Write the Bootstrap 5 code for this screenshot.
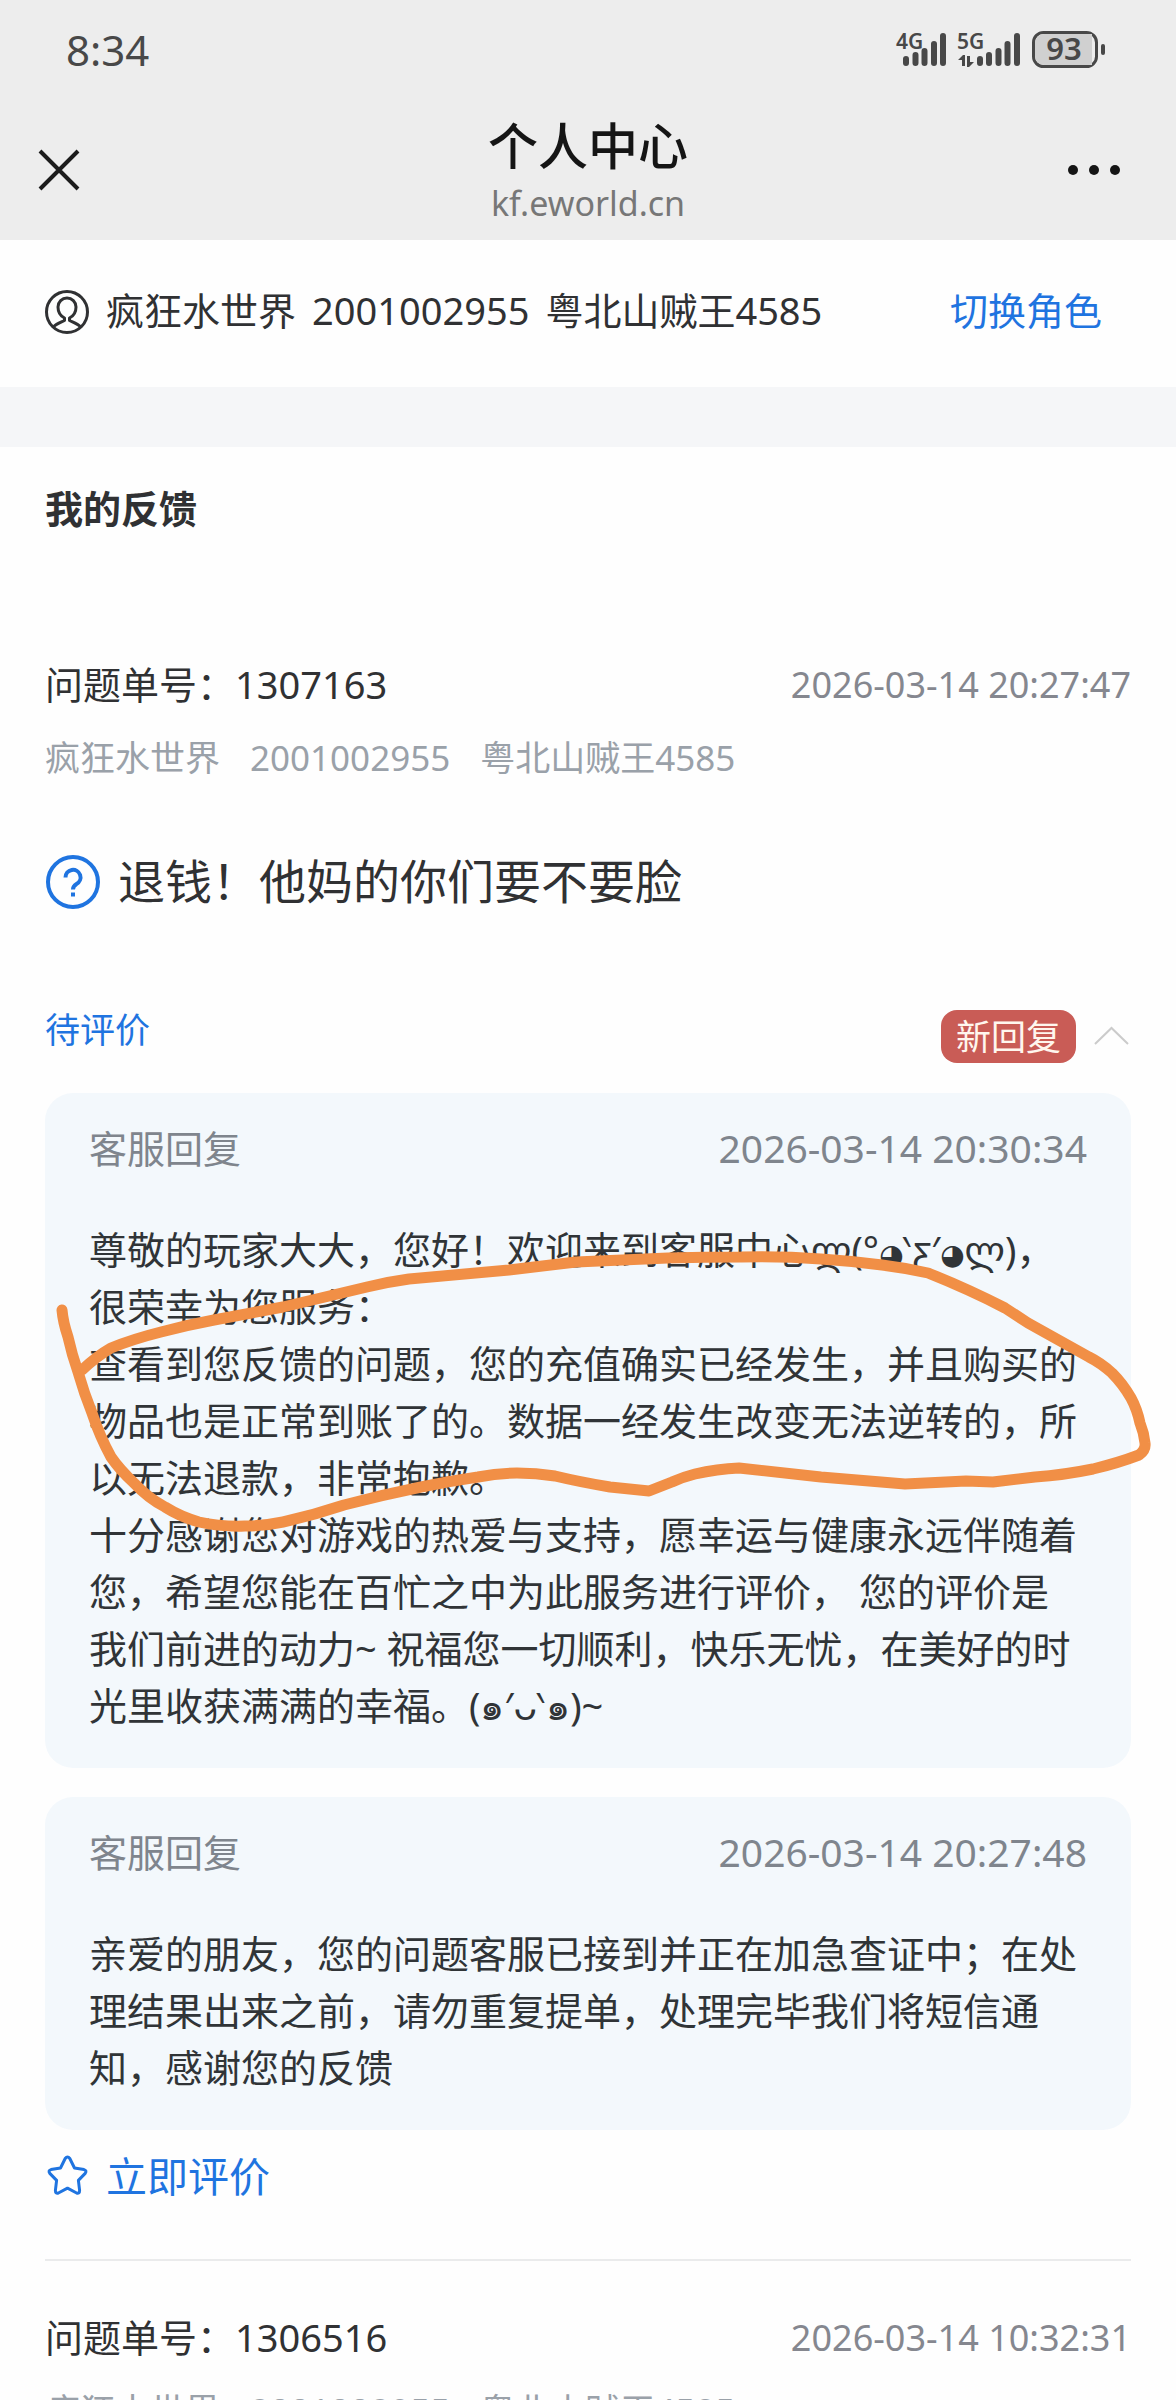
<!DOCTYPE html>
<html lang="zh-CN">
<head>
<meta charset="utf-8">
<meta name="viewport" content="width=device-width, initial-scale=1">
<title>个人中心</title>
<link href="https://cdn.jsdelivr.net/npm/bootstrap@5.3.0/dist/css/bootstrap.min.css" rel="stylesheet">
<style>
  body { font-family: "Noto Sans", "Noto Sans CJK SC", "DejaVu Sans", sans-serif; font-size: 38px; line-height: 58px; color: #303133; background: #fefefe; }
  a { color: #1f74e0; text-decoration: none; }
  svg { display: block; flex: none; }
  .screen { height: 100vh; overflow: hidden; }
  .app-head { background: #ededed; }
  .status-line { height: 100px; padding: 0 70px 0 66px; font-size: 42px; color: #484848; }
  .title-bar { height: 140px; padding: 0 36px; }
  .title-bar h1 { font-size: 50px; line-height: 56px; font-weight: 500; color: #151515; margin: 0 0 9px; }
  .title-bar .host { font-size: 34px; line-height: 40px; color: #777; }
  .title-side { width: 76px; }
  .icon-btn { background: none; border: 0; padding: 0; }
  .account { padding: 38px 74px 45px 45px; line-height: 64px; }
  .account-icon { margin-right: 17px; }
  .gap-name { column-gap: 16px; }
  .divider-band { height: 60px; background: #f5f6f8; }
  .feedback { padding: 32px 45px 0; }
  .feedback h2 { font-size: 38px; line-height: 58px; font-weight: 700; margin: 0 0 118px; }
  .stamp { font-size: 36px; line-height: 60px; color: #85878f; }
  .role-line { margin-top: 18px; font-size: 35px; line-height: 50px; column-gap: 30px; color: #9aa1a9; }
  .question { margin: 66px 0 97px; gap: 18px; }
  .question h3 { font-size: 47px; line-height: 64px; font-weight: 400; margin: 0; }
  .state { font-size: 35px; line-height: 40px; color: #1f74e0; }
  .new-tag { font-size: 35px; line-height: 53px; padding: 0 15px; border-radius: 16px; background: #c95c56; color: #fff6ee; font-weight: 400; }
  .replies { margin-top: 30px; gap: 29px; }
  .reply { background: #f3f8fc; border: 0; border-radius: 28px; padding: 25px 44px 34px 44px; color: #303437; }
  .reply-head { line-height: 60px; margin-bottom: 43px; color: #7f858d; }
  .reply-head time { font-size: 39px; }
  .reply p { margin: 0 4px 0 0; line-height: 57px; }
  .eye { font-size: 28px; line-height: 1; }
  .pen-mark { position: absolute; top: 0; left: 0; width: 100%; overflow: visible; pointer-events: none; }
  .rate { margin-top: 18px; font-size: 41px; line-height: 56px; gap: 18px; }
  .rule-line { height: 2px; background: #eaebec; margin: 55px 0 47px; }
</style>
<script src="https://cdn.jsdelivr.net/npm/bootstrap@5.3.0/dist/js/bootstrap.bundle.min.js"></script>
</head>
<body>
<div class="screen">
  <header class="app-head">
    <div class="status-line d-flex align-items-center justify-content-between">
      <span>8:34</span>
      <svg width="212" height="80" viewBox="894 10 212 80" fill="#484848" role="img" aria-label="4G 5G 93">
        <g font-family="Noto Sans, sans-serif" font-weight="600">
          <text x="896" y="49" font-size="21">4G</text>
          <text x="957" y="49" font-size="21">5G</text>
          <g stroke="#484848" stroke-width="6" stroke-linecap="round">
            <path d="M906 59v4M915.500 55v8M924.500 51v12M934 44v19M943 36v27"/>
            <path d="M980 59v4M989 55v8M998.500 51v12M1007.500 44v19M1017 36v27"/>
          </g>
          <path d="M958 60l5-5h2v11h-3v-6zM967 56h3v6h4l-5 5h-2z"/>
          <rect x="1033.500" y="32.500" width="63" height="34" rx="10" fill="#ededed" stroke="#484848" stroke-width="3"/>
          <path d="M1044 34h48v31h-48a9 9 0 0 1-9-9v-13a9 9 0 0 1 9-9z" fill="#d0d0d0"/>
          <rect x="1101" y="44" width="4" height="11" rx="2"/>
          <text x="1064" y="60" font-size="31" text-anchor="middle">93</text>
        </g>
      </svg>
    </div>
    <div class="title-bar d-flex align-items-center justify-content-between">
      <div class="title-side d-flex">
        <button class="icon-btn" type="button" aria-label="关闭">
          <svg width="46" height="46" viewBox="0 0 46 46" fill="none" stroke="#1c1c1c" stroke-width="4"><path d="M4 4l38 38M42 4L4 42"/></svg>
        </button>
      </div>
      <div class="text-center">
        <h1>个人中心</h1>
        <div class="host">kf.eworld.cn</div>
      </div>
      <div class="title-side d-flex">
        <button class="icon-btn" type="button" aria-label="更多">
          <svg width="60" height="20" viewBox="0 0 60 20" fill="#151515"><circle cx="9" cy="10" r="5"/><circle cx="30" cy="10" r="5"/><circle cx="51" cy="10" r="5"/></svg>
        </button>
      </div>
    </div>
  </header>

  <section class="account d-flex align-items-center justify-content-between">
    <div class="d-flex align-items-center">
      <svg class="account-icon" width="44" height="44" viewBox="0 -2 44 44" fill="none" stroke="#303133" stroke-width="3" stroke-linejoin="round" overflow="visible"><circle cx="22" cy="22" r="20.500"/><path d="M8.500 37c2-3 8-5 11-6.500v-2.500c-4-2-6.500-5.500-6.500-11a9 9 0 0 1 18 0c0 5.500-2.500 9-6.500 11v2.500c3 1.500 9 3.500 11 6.500"/></svg>
      <div class="d-flex gap-name"><span>疯狂水世界</span><span>2001002955</span><span>粤北山贼王4585</span></div>
    </div>
    <a href="#">切换角色</a>
  </section>
  <div class="divider-band"></div>

  <main class="feedback">
    <h2>我的反馈</h2>

    <article>
      <div class="d-flex justify-content-between"><span>问题单号：1307163</span><time class="stamp">2026-03-14 20:27:47</time></div>
      <div class="role-line d-flex"><span>疯狂水世界</span><span>2001002955</span><span>粤北山贼王4585</span></div>
      <div class="question d-flex align-items-center">
        <svg width="55" height="56" viewBox="0 0 55 56" fill="none" stroke="#1f74e0" stroke-width="4"><circle cx="28" cy="29" r="25"/><path d="M20.500 24.500a7.500 7.500 0 1 1 11 6.500c-2.500 1.500-3.500 2.500-3.500 5.500"/><path d="M28 39.500v4"/></svg>
        <h3>退钱！他妈的你们要不要脸</h3>
      </div>
      <div class="d-flex justify-content-between">
        <span class="state">待评价</span>
        <div class="d-flex align-items-center">
          <span class="badge new-tag">新回复</span>
          <button class="icon-btn ms-3" type="button" aria-label="收起">
            <svg width="39" height="22" viewBox="0 0 39 22" fill="none" stroke="#cbcbcb" stroke-width="2"><path d="M3 18L19.500 2 36 18"/></svg>
          </button>
        </div>
      </div>

      <div class="replies d-flex flex-column">
        <section class="reply position-relative">
          <div class="reply-head d-flex justify-content-between"><span>客服回复</span><time>2026-03-14 20:30:34</time></div>
          <p>尊敬的玩家大大，您好！欢迎来到客服中心ლ(°<span class="eye">◕</span>‵ƹ′<span class="eye">◕</span>ლ)，很荣幸为您服务：</p>
          <p>查看到您反馈的问题，您的充值确实已经发生，并且购买的物品也是正常到账了的。数据一经发生改变无法逆转的，所以无法退款，非常抱歉。</p>
          <p>十分感谢您对游戏的热爱与支持，愿幸运与健康永远伴随着您，希望您能在百忙之中为此服务进行评价， 您的评价是我们前进的动力~ 祝福您一切顺利，快乐无忧，在美好的时光里收获满满的幸福。(๑′ᴗ‵๑)~</p>
          <!-- hand-drawn circle around the refund answer -->
          <svg class="pen-mark" viewBox="45 1093 1086 675" fill="none" stroke="#f18f46" stroke-width="11" stroke-linecap="round" stroke-linejoin="round" aria-hidden="true">
            <path d="M62 1310Q63 1322 68 1337Q72 1355 78 1372Q84 1393 92 1413Q100 1437 111 1457Q120 1470 134 1483Q148 1498 165 1507Q181 1517 199 1522Q222 1527 245 1526Q264 1526 283 1522Q314 1515 344 1505Q382 1495 421 1487Q450 1481 478 1477Q498 1473 517 1473Q536 1473 555 1476Q580 1482 610 1487L649 1491L672 1482Q683 1477 695 1474Q717 1469 739 1468L821 1477L905 1484L966 1481L993 1482L1035 1477Q1064 1475 1093 1469Q1118 1463 1139 1455Q1146 1450 1145 1443Q1144 1433 1140 1423Q1137 1409 1131 1398Q1123 1384 1112 1373Q1101 1363 1089 1357L1028 1323L1005 1308Q968 1289 928 1273Q906 1268 882 1265Q852 1261 821 1259Q781 1256 741 1257Q704 1257 668 1258L576 1262L509 1270L409 1279Q387 1282 367 1287Q325 1297 283 1307L214 1320Q187 1325 161 1332Q133 1339 111 1348Q97 1356 82 1370"/>
          </svg>
        </section>
        <section class="reply">
          <div class="reply-head d-flex justify-content-between"><span>客服回复</span><time>2026-03-14 20:27:48</time></div>
          <p>亲爱的朋友，您的问题客服已接到并正在加急查证中；在处理结果出来之前，请勿重复提单，处理完毕我们将短信通知，感谢您的反馈</p>
        </section>
      </div>

      <a class="rate d-flex align-items-center" href="#">
        <svg width="43" height="42" viewBox="0 0 43 42" fill="none" stroke="#1f74e0" stroke-width="3" stroke-linejoin="round"><path d="M20.200 3.500q2.300-3 4.600 0l4.700 9.500 9.500 1.600q3.200 1 1.200 3.800l-6.800 7 1.200 10q0 3.500-3 2.600l-9.100-4.800-9.100 4.800q-3 .9-3-2.600l1.200-10-6.800-7q-2-2.800 1.200-3.800l9.500-1.600z"/></svg>
        <span>立即评价</span>
      </a>
    </article>

    <div class="rule-line"></div>

    <article>
      <div class="d-flex justify-content-between"><span>问题单号：1306516</span><time class="stamp">2026-03-14 10:32:31</time></div>
      <div class="role-line d-flex"><span>疯狂水世界</span><span>2001002955</span><span>粤北山贼王4585</span></div>
    </article>
  </main>
</div>
</body>
</html>
